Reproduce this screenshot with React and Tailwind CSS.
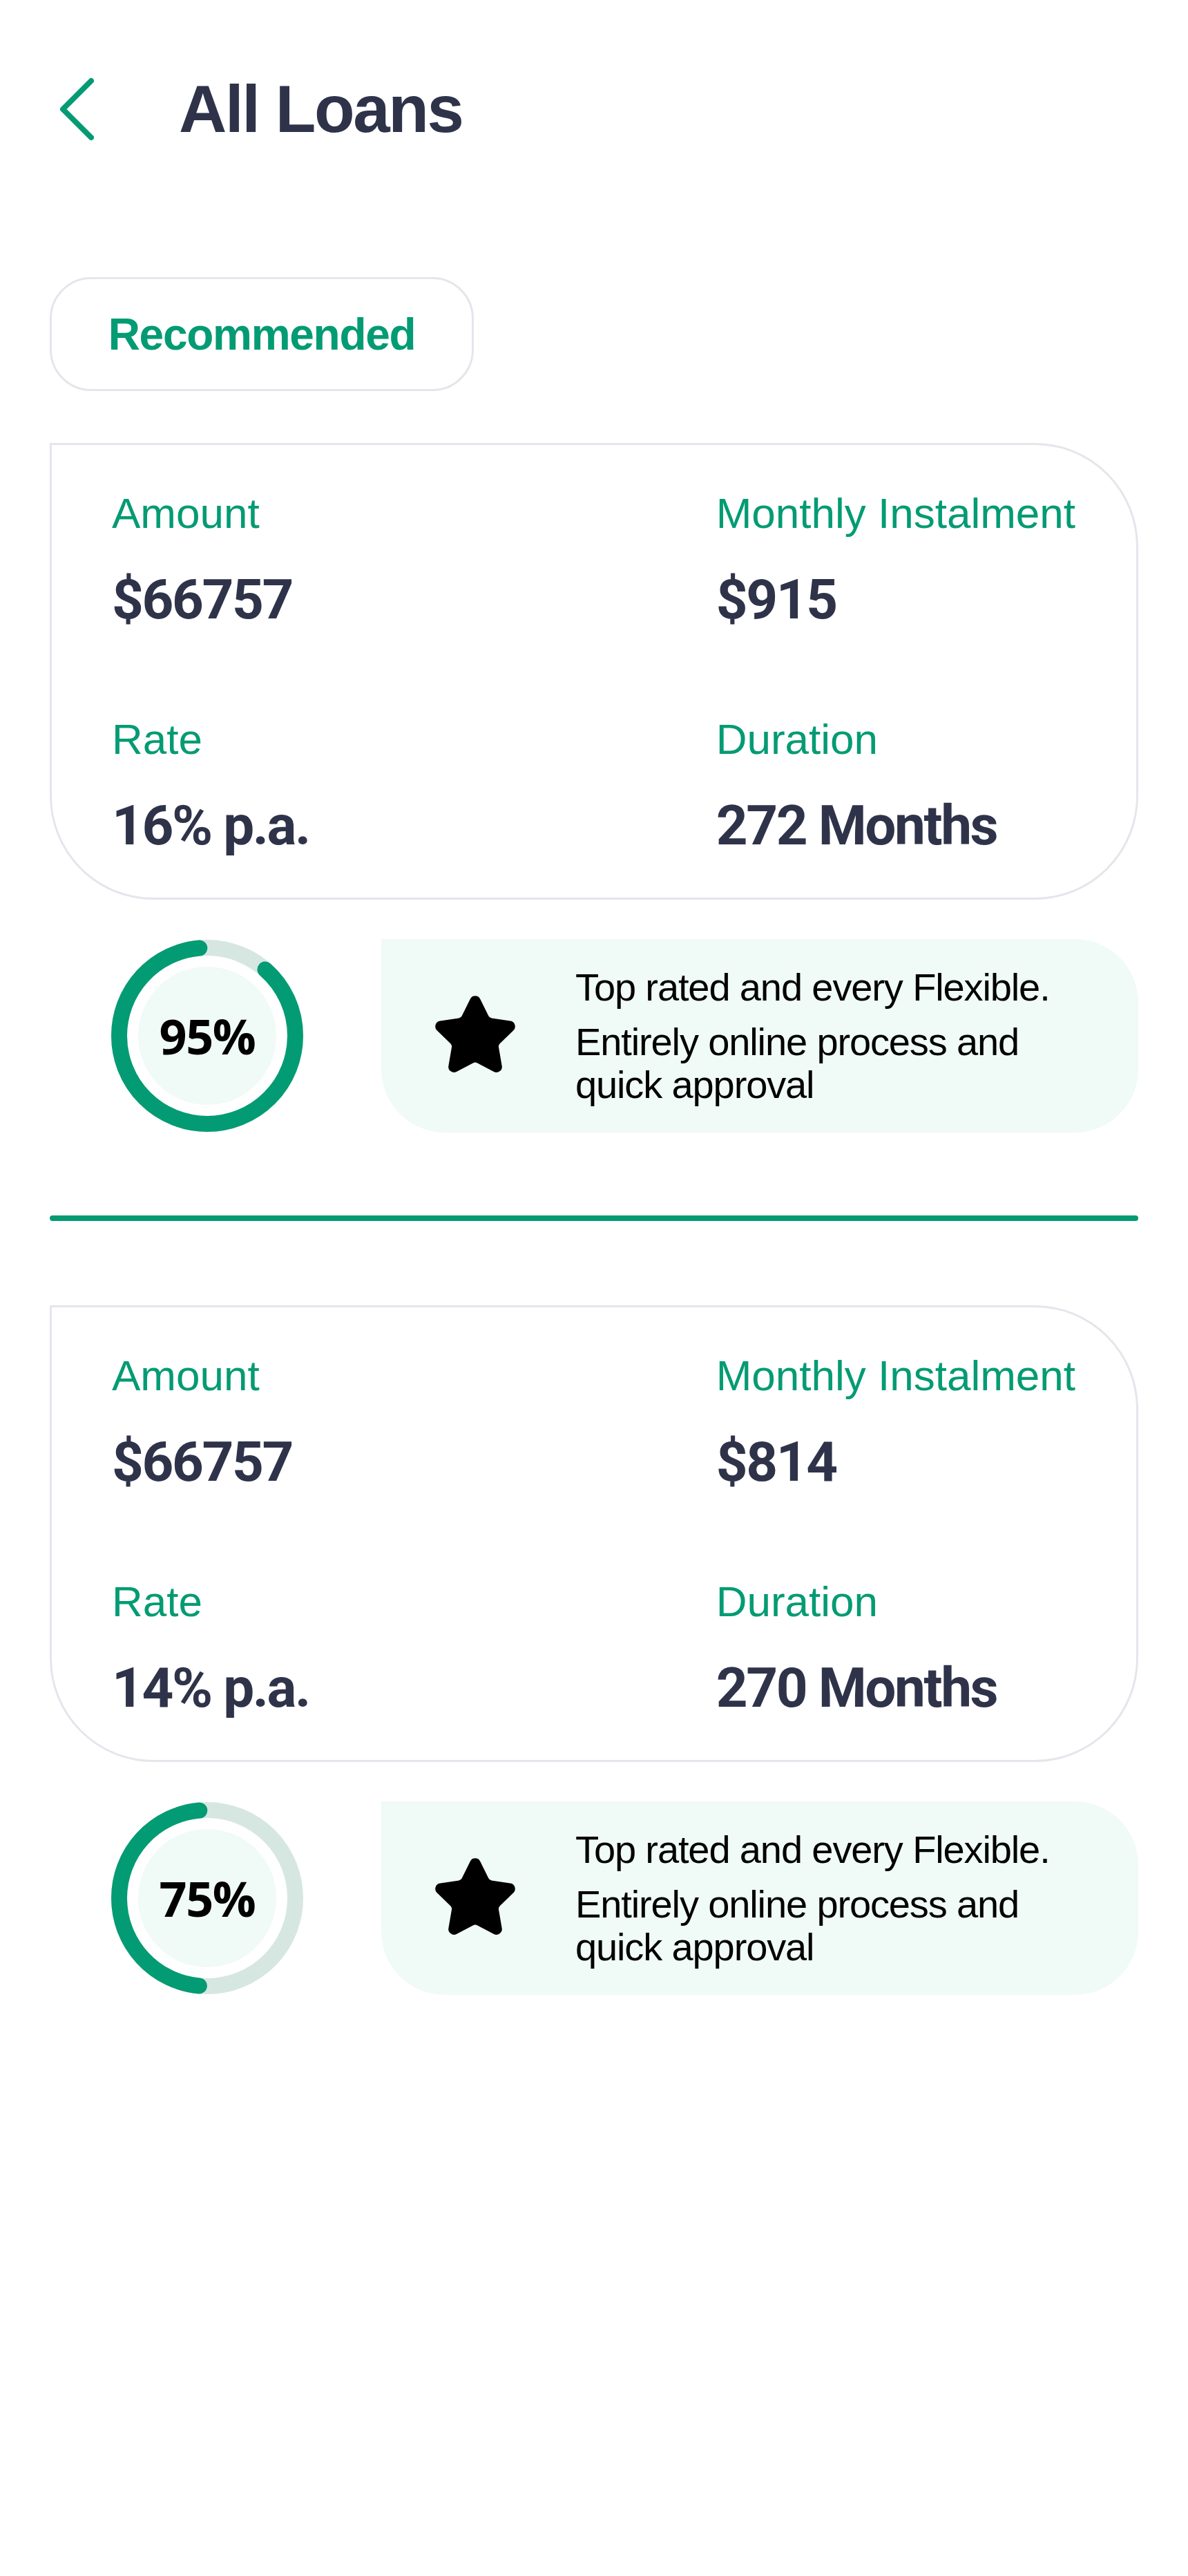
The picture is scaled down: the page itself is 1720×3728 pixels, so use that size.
import React from "react";
import { Star } from "lucide-react";

const loans = [
  { amount: "$66757", monthly: "$915", rate: "16% p.a.", duration: "272", score: 95, fill: 0.9 },
  { amount: "$66757", monthly: "$814", rate: "14% p.a.", duration: "270", score: 75, fill: 0.5 },
];

function ScoreRing({ score, fill }) {
  const r = 127.5;
  const c = 2 * Math.PI * r;
  const stroke = 23;
  const start = (1 - fill) * c + stroke / 2;
  const len = fill * c - stroke;

  return (
    <div className="relative w-[278px] h-[278px] shrink-0">
      <svg width="278" height="278" viewBox="0 0 278 278">
        <circle cx="139" cy="139" r={r} fill="none" stroke="#d6e7e1" strokeWidth={stroke} />
        <circle cx="139" cy="139" r="100" fill="#f0faf6" />
        <circle
          cx="139"
          cy="139"
          r={r}
          fill="none"
          stroke="#039b73"
          strokeWidth={stroke}
          strokeLinecap="round"
          strokeDasharray={`${len} ${c}`}
          strokeDashoffset={-start}
          transform="rotate(-90 139 139)"
        />
      </svg>
      <div className="absolute inset-0 flex items-center justify-center">
        <span className="font-['Open_Sans',sans-serif] font-bold text-[70px] leading-none tracking-[-0.02em] text-black">
          {score}%
        </span>
      </div>
    </div>
  );
}

function Field({ label, children, first }) {
  return (
    <div className={first ? "" : "mt-[131px]"}>
      <p className="font-['Liberation_Sans',sans-serif] text-[62px] leading-none text-[#039b73]">
        {label}
      </p>
      <p className="mt-[54px] font-['Roboto',sans-serif] font-bold text-[80px] leading-none tracking-[-0.03em] text-[#2f334a]">
        {children}
      </p>
    </div>
  );
}

function LoanCard({ loan }) {
  return (
    <>
      <div className="border-[3px] border-[#e3e6eb] rounded-[150px] rounded-tl-none pl-[87px] pr-[88px] pt-[68px] pb-[64px] flex justify-between">
        <div>
          <Field label="Amount" first>{loan.amount}</Field>
          <Field label="Rate">{loan.rate}</Field>
        </div>
        <div>
          <Field label="Monthly Instalment" first>{loan.monthly}</Field>
          <Field label="Duration">{loan.duration} Months</Field>
        </div>
      </div>

      <div className="mt-[57px] flex items-center pl-[89px]">
        <ScoreRing score={loan.score} fill={loan.fill} />
        <div className="ml-[113px] flex-1 h-[280px] bg-[#f0faf6] rounded-[92px] rounded-tl-none flex items-center pl-[73px] pr-[80px]">
          <Star size={126} fill="black" stroke="black" strokeWidth={2} className="shrink-0" />
          <div className="ml-[82px] font-['Liberation_Sans',sans-serif] text-[56px] tracking-[-0.02em] text-black">
            <p className="leading-[62px]">Top rated and every Flexible.</p>
            <p className="leading-[62px] mt-[17px]">Entirely online process and quick approval</p>
          </div>
        </div>
      </div>
    </>
  );
}

export default function App() {
  return (
    <div className="min-h-[3728px] bg-white px-[72px] pt-[110px]">
      <div className="flex items-center h-[96px]">
        <svg width="50" height="92" viewBox="0 0 50 92" className="ml-[14px] shrink-0">
          <polyline
            points="46,5 5,46 46,87"
            fill="none"
            stroke="#039b73"
            strokeWidth="8"
            strokeLinecap="round"
            strokeLinejoin="round"
          />
        </svg>
        <h1 className="ml-[123px] font-['Liberation_Sans',sans-serif] font-bold text-[96px] leading-none tracking-[-0.025em] text-[#2f334a]">
          All Loans
        </h1>
      </div>

      <button className="mt-[195px] w-[614px] h-[165px] border-[3px] border-[#e3e6eb] rounded-[60px] flex items-center justify-center font-['Liberation_Sans',sans-serif] font-bold text-[64px] tracking-[-0.02em] text-[#039b73]">
        Recommended
      </button>

      <div className="mt-[75px]">
        <LoanCard loan={loans[0]} />
      </div>

      <div className="mt-[120px] h-[8px] rounded-full bg-[#039b73]" />

      <div className="mt-[122px]">
        <LoanCard loan={loans[1]} />
      </div>
    </div>
  );
}
